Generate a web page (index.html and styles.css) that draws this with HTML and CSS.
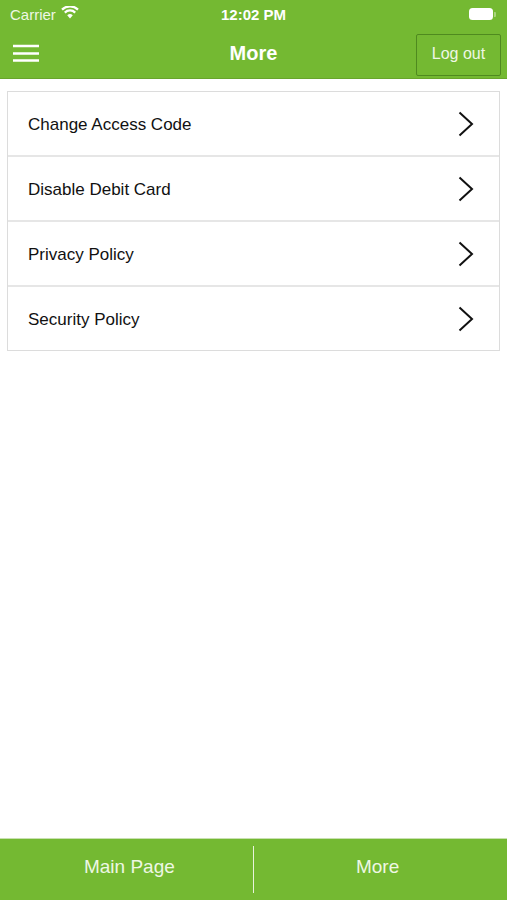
FILE: index.html
```html
<!DOCTYPE html>
<html>
<head>
<meta charset="utf-8">
<link rel="stylesheet" href="styles.css">
</head>
<body>
<div class="app">
  <header class="top">
    <div class="status">
      <div class="carrier">Carrier
        <svg class="wifi" width="18" height="13" viewBox="0 0 18 13"><path d="M9 12.5 L6.2 9.3 A4 4 0 0 1 11.8 9.3 Z" fill="#fff"/><path d="M3.8 6.6 A7.4 7.4 0 0 1 14.2 6.6" stroke="#fff" stroke-width="2.2" fill="none"/><path d="M1 3.6 A11.4 11.4 0 0 1 17 3.6" stroke="#fff" stroke-width="2.2" fill="none"/></svg>
      </div>
      <div class="time">12:02 PM</div>
      <div class="battery"><span class="cell"></span><span class="nub"></span></div>
    </div>
    <div class="nav">
      <svg class="menu" width="26" height="18" viewBox="0 0 26 18"><path d="M0 2h26M0 9.5h26M0 16.5h26" stroke="#fff" stroke-width="2.4"/></svg>
      <div class="title">More</div>
      <button class="logout">Log out</button>
    </div>
  </header>
  <main class="content">
    <ul class="list">
      <li class="row"><span>Change Access Code</span><svg class="chev" width="16" height="26" viewBox="0 0 16 26"><path d="M1.5 1.5 L14 13 L1.5 24.5" stroke="#111" stroke-width="2" fill="none"/></svg></li>
      <li class="row"><span>Disable Debit Card</span><svg class="chev" width="16" height="26" viewBox="0 0 16 26"><path d="M1.5 1.5 L14 13 L1.5 24.5" stroke="#111" stroke-width="2" fill="none"/></svg></li>
      <li class="row"><span>Privacy Policy</span><svg class="chev" width="16" height="26" viewBox="0 0 16 26"><path d="M1.5 1.5 L14 13 L1.5 24.5" stroke="#111" stroke-width="2" fill="none"/></svg></li>
      <li class="row"><span>Security Policy</span><svg class="chev" width="16" height="26" viewBox="0 0 16 26"><path d="M1.5 1.5 L14 13 L1.5 24.5" stroke="#111" stroke-width="2" fill="none"/></svg></li>
    </ul>
  </main>
  <footer class="tabs">
    <div class="tab tab-left">Main Page</div>
    <div class="sep"></div>
    <div class="tab tab-right">More</div>
  </footer>
</div>
</body>
</html>
```

FILE: styles.css
```css
* { box-sizing: border-box; }
html, body { margin: 0; padding: 0; }
body { font-family: "Liberation Sans", Arial, sans-serif; background: #fff; }
.app { width: 507px; height: 900px; display: flex; flex-direction: column; }
.top { background: #74b932; color: #fff; height: 79px; border-bottom: 1px solid #68a52c; }
.status { height: 28px; display: flex; align-items: center; justify-content: space-between; padding: 0 10px 0 10px; position: relative; font-size: 15px; }
.carrier { display: flex; align-items: center; gap: 5px; color: #eef7e4; }
.wifi { margin-top: -3px; }
.time { position: absolute; left: 0; right: 0; text-align: center; font-weight: bold; font-size: 15px; pointer-events: none; }
.battery { display: flex; align-items: center; gap: 1px; margin-right: 1px; }
.cell { width: 24px; height: 12px; background: #fff; border-radius: 3.5px; }
.nub { width: 2px; height: 5px; background: #a9d47c; border-radius: 0 1px 1px 0; }
.nav { height: 50px; display: flex; align-items: center; justify-content: space-between; padding: 0 6px 0 13px; position: relative; }
.menu { display: block; }
.title { position: absolute; left: 0; right: 0; text-align: center; font-size: 20px; font-weight: bold; pointer-events: none; top: 14px; }
.logout { width: 85px; height: 42px; margin-top: 3px; background: #74b932; border: 1px solid #4f8a1f; border-radius: 2px; color: #eef7e4; font-family: "Liberation Sans", Arial, sans-serif; font-size: 16px; padding: 0 0 2px 0; }
.content { flex: 1; padding: 12px 7px 0 7px; }
.list { list-style: none; margin: 0; padding: 0; border: 1px solid #dcdcdc; }
.row { height: 65px; display: flex; align-items: center; justify-content: space-between; padding: 2px 25px 0 20px; border-bottom: 2px solid #e6e6e6; font-size: 17px; color: #111; }
.row:last-child { border-bottom: none; height: 63px; }
.chev { display: block; margin-top: -2px; }
.tabs { height: 62px; background: #74b932; border-top: 1px solid #c8e0b0; display: flex; align-items: center; color: #eef7e4; font-size: 19px; }
.tab { flex: 1; text-align: center; padding-bottom: 6px; }
.tab-left { padding-left: 6px; }
.tab-right { padding-right: 6px; }
.sep { width: 1.5px; height: 47px; background: #e8f3dc; }
```
